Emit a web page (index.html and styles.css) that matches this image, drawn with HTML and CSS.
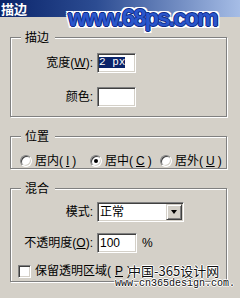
FILE: index.html
```html
<!DOCTYPE html>
<html lang="zh-CN">
<head>
  <meta charset="UTF-8" />
  <meta name="viewport" content="width=device-width, initial-scale=1.0" />
  <title>描边</title>
  <link rel="stylesheet" href="styles.css">
</head>
<body>
  <div class="titlebar">描边</div>
  <div class="logo">www.68ps.com</div>

  <div class="group first">
    <span class="legend">描边</span>
    <div class="form stroke-form">
      <label>宽度(<u>W</u>):</label>
      <div class="field"><span class="sel">2 px</span></div>
      <label>颜色:</label>
      <div class="field"></div>
    </div>
  </div>

  <div class="group">
    <span class="legend">位置</span>
    <div class="radios">
      <div class="radio"><span class="circle"></span>居内(<u>I</u>)</div>
      <div class="radio"><span class="circle on"></span>居中(<u>C</u>)</div>
      <div class="radio"><span class="circle"></span>居外(<u>U</u>)</div>
    </div>
  </div>

  <div class="group">
    <span class="legend">混合</span>
    <div class="form blend-form">
      <label>模式:</label>
      <div class="select"><span class="value">正常</span><span class="drop"><span class="arrow"></span></span></div>
      <label>不透明度(<u>O</u>):</label>
      <div class="with-unit"><div class="field num">100</div><span>%</span></div>
    </div>
    <div class="check"><span class="box"></span>保留透明区域(<u>P</u>)</div>
  </div>

  <div class="mark-cn">中国-365设计网</div>
  <div class="mark-url">www.cn365design.com.</div>
</body>
</html>
```

FILE: styles.css
```css
* {
  box-sizing: border-box;
}
body {
  margin: 0;
  height: 298px;
  overflow: hidden;
  position: relative;
  background-color: #d4d0c8;
  color: #000;
  font-family: "Liberation Sans", "Noto Sans CJK SC", sans-serif;
  font-size: 12px;
  line-height: 14px;
}
u {
  text-decoration: underline;
}
.titlebar {
  height: 17px;
  padding-left: 1px;
  background: linear-gradient(to right, #0a246a, #2c4c92 40%, #a6bde6);
  color: #fff;
  font-family: "Noto Sans CJK SC", sans-serif;
  font-weight: bold;
  font-size: 13px;
  line-height: 17px;
}
.logo {
  position: absolute;
  top: 6px;
  left: 68px;
  font-family: "Liberation Sans", Arial, sans-serif;
  font-weight: bold;
  font-size: 24px;
  line-height: 24px;
  letter-spacing: -2px;
  color: #2a56cc;
  text-shadow:
    1px 0 #0e2a86, -1px 0 #0e2a86, 0 1px #0e2a86, 0 -1px #0e2a86,
    2px 0 #fff, -2px 0 #fff, 0 2px #fff, 0 -2px #fff,
    2px 2px #fff, -2px -2px #fff, 2px -2px #fff, -2px 2px #fff;
}
.group {
  width: 217px;
  margin: 19px 0 0 10px;
  border: 1px solid #808080;
  box-shadow: inset 1px 1px 0 #fff, 1px 1px 0 #fff;
}
.group.first {
  margin-top: 20px;
  padding-bottom: 9px;
}
.legend {
  display: block;
  width: fit-content;
  margin: -7px 0 0 10px;
  padding: 0 6px 0 4px;
  background-color: #d4d0c8;
}
.form {
  display: grid;
  grid-template-columns: 82px auto;
  column-gap: 4px;
  align-items: center;
  justify-items: start;
}
.form label {
  justify-self: end;
}
.stroke-form {
  margin-top: 8px;
  row-gap: 14px;
}
.blend-form {
  margin-top: 6px;
  row-gap: 11px;
}
.field {
  width: 39px;
  height: 20px;
  background-color: #fff;
  border: 1px solid;
  border-color: #808080 #fff #fff #808080;
  box-shadow: inset 1px 1px 0 #404040, inset -1px -1px 0 #d4d0c8;
}
.sel {
  display: block;
  width: fit-content;
  margin: 3px 0 0 1px;
  background-color: #0a246a;
  color: #fff;
  font-family: "Liberation Mono", monospace;
  font-size: 11px;
  line-height: 11px;
}
.field.num {
  width: 40px;
  padding-left: 2px;
  line-height: 18px;
}
.with-unit {
  display: flex;
  align-items: center;
  gap: 5px;
}
.radios {
  display: grid;
  grid-template-columns: repeat(3, 70px);
  margin: 10px 0 0 9px;
}
.group:nth-of-type(2) {
  padding-bottom: 7px;
}
.radio {
  display: flex;
  align-items: center;
  gap: 3px;
}
.circle {
  width: 12px;
  height: 12px;
  border-radius: 50%;
  background-color: #fff;
  border: 1px solid;
  border-color: #808080 #fff #fff #808080;
  box-shadow: inset 1px 1px 0 #404040, inset -1px -1px 0 #d4d0c8;
  display: flex;
  align-items: center;
  justify-content: center;
}
.circle.on::after {
  content: "";
  width: 4px;
  height: 4px;
  border-radius: 50%;
  background-color: #000;
}
.select {
  display: flex;
  align-items: center;
  width: 87px;
  height: 20px;
  padding: 1px;
  background-color: #fff;
  border: 1px solid;
  border-color: #808080 #fff #fff #808080;
  box-shadow: inset 1px 1px 0 #404040, inset -1px -1px 0 #d4d0c8;
}
.value {
  padding-left: 1px;
}
.drop {
  margin-left: auto;
  width: 16px;
  height: 16px;
  background-color: #d4d0c8;
  border: 1px solid;
  border-color: #d4d0c8 #404040 #404040 #d4d0c8;
  box-shadow: inset 1px 1px 0 #fff, inset -1px -1px 0 #808080;
  display: flex;
  align-items: center;
  justify-content: center;
}
.arrow {
  width: 0;
  height: 0;
  border-left: 3.5px solid transparent;
  border-right: 3.5px solid transparent;
  border-top: 4px solid #000;
}
.check {
  display: flex;
  align-items: center;
  gap: 4px;
  margin: 11px 0 0 7px;
  padding-bottom: 3px;
}
.box {
  width: 13px;
  height: 13px;
  background-color: #fff;
  border: 1px solid;
  border-color: #808080 #fff #fff #808080;
  box-shadow: inset 1px 1px 0 #404040, inset -1px -1px 0 #d4d0c8;
}
.mark-cn {
  position: absolute;
  top: 263px;
  left: 128px;
  font-family: "Noto Sans CJK SC", sans-serif;
  font-size: 13px;
  line-height: 15px;
  color: #111;
  text-shadow: 1px 0 #fff, -1px 0 #fff, 0 1px #fff, 0 -1px #fff;
}
.mark-url {
  position: absolute;
  top: 278px;
  left: 115px;
  font-family: "Liberation Mono", monospace;
  font-size: 10px;
  line-height: 12px;
  color: #111;
  text-shadow: 1px 0 #fff, -1px 0 #fff, 0 1px #fff, 0 -1px #fff;
}
```
